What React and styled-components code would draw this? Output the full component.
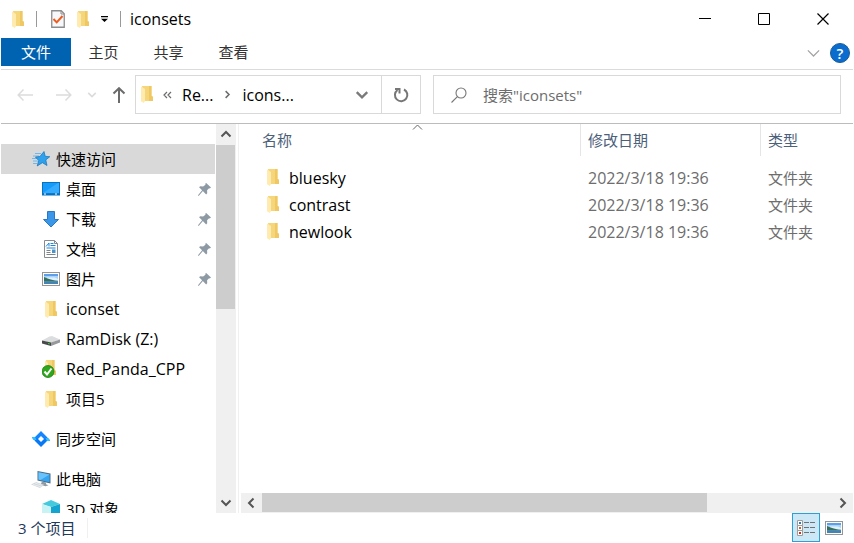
import React from 'react'
import styled, { createGlobalStyle } from 'styled-components'

const GlobalStyle = createGlobalStyle`
  * {
    box-sizing: border-box;
  }

  body {
    margin: 0;
    background: #fff;
    color: #000;
    font: 15px/20px "Open Sans", "Noto Sans CJK SC", sans-serif;
  }

  button, input {
    font: inherit;
    color: inherit;
    border: 0;
    padding: 0;
    background: none;
  }

  svg {
    display: block;
    flex: none;
  }
`

const Window = styled.div`
  display: flex;
  flex-direction: column;
  height: 100vh;
  padding: 0 1px;
  overflow: hidden;
`

const TitleBar = styled.header`
  display: flex;
  align-items: center;
  height: 38px;
  padding-left: 11px;
`

const QuickTools = styled.div`
  display: flex;
  align-items: center;
  gap: 12px;
`

const ToolButton = styled.button`
  display: flex;
  align-items: center;
  justify-content: center;
`

const Divider = styled.span`
  width: 1px;
  height: 16px;
  background: #999;
  margin-right: ${props => props.$space || 0}px;
`

const Title = styled.h1`
  margin: 0 0 0 9px;
  font-size: 16px;
  line-height: 20px;
  font-weight: 400;
`

const WindowButtons = styled.div`
  display: flex;
  margin-left: auto;
  padding-right: 1px;
`

const WindowButton = styled.button`
  display: flex;
  align-items: center;
  justify-content: center;
  width: 59px;
  height: 38px;
`

const Ribbon = styled.nav`
  display: flex;
  align-items: flex-start;
  height: 32px;
  border-bottom: 1px solid #dadbdc;
`

const Tab = styled.button`
  width: ${props => (props.$primary ? 70 : 65)}px;
  height: 28px;
  color: ${props => (props.$primary ? '#fff' : '#333')};
  background: ${props => (props.$primary ? '#0063b1' : 'transparent')};
`

const RibbonEnd = styled.div`
  display: flex;
  align-items: center;
  gap: 9px;
  height: 30px;
  margin-left: auto;
  padding-right: 3px;
`

const HelpButton = styled.button`
  width: 20px;
  height: 20px;
  border: 1px solid #1b5c96;
  border-radius: 50%;
  background: #0a6cce;
  color: #fff;
  font-size: 15px;
  line-height: 18px;
  font-weight: 600;
`

const NavBar = styled.div`
  display: flex;
  align-items: center;
  height: 54px;
  padding: 5px 12px 9px 0;
  border-bottom: 1px solid #bcbcbc;
`

const NavButtons = styled.div`
  display: flex;
  align-items: center;
  justify-content: space-between;
  width: 126px;
  margin-right: 8px;
  padding-left: 16px;
`

const HistoryButtons = styled.div`
  display: flex;
  gap: 23px;
`

const AddressBar = styled.div`
  display: flex;
  align-items: center;
  width: 286px;
  height: 39px;
  border: 1px solid #d9d9d9;
`

const Crumbs = styled.div`
  display: flex;
  align-items: center;
  flex: 1;
  gap: 10px;
  padding-left: 5px;
  font-size: 16px;
`

const AddressButton = styled.button`
  display: flex;
  align-items: center;
  justify-content: center;
  width: 39px;
  height: 37px;
  border-left: ${props => (props.$divided ? '1px solid #d9d9d9' : '0')};
`

const SearchBox = styled.label`
  display: flex;
  align-items: center;
  flex: 1;
  gap: 16px;
  height: 39px;
  margin-left: 12px;
  padding-left: 17px;
  border: 1px solid #d9d9d9;
`

const SearchInput = styled.input`
  flex: 1;
  min-width: 0;
  outline: none;

  &::placeholder {
    color: #6d6d6d;
    opacity: 1;
  }
`

const Body = styled.div`
  display: flex;
  flex: 1;
  min-height: 0;
`

const Sidebar = styled.aside`
  display: flex;
  width: 238px;
  padding-right: 2px;
  border-right: 1px solid #f0f0f0;
`

const Tree = styled.nav`
  flex: 1;
  margin-right: 1px;
  padding-top: 20px;
  overflow: hidden;
`

const TreeGroup = styled.div`
  margin-bottom: 10px;
`

const TreeItem = styled.a`
  display: flex;
  align-items: center;
  gap: 6px;
  height: 30px;
  padding: 0 4px 0 ${props => (props.$nested ? 41 : 31)}px;
  color: #000;
  text-decoration: none;
  white-space: nowrap;
  background: ${props => (props.$selected ? '#d9d9d9' : 'transparent')};
`

const IconSlot = styled.span`
  display: flex;
  justify-content: center;
  width: 18px;
`

const ItemLabel = styled.span`
  flex: 1;
  font-size: ${props => (props.$latin ? 16 : 15)}px;
`

const ScrollBar = styled.div`
  display: flex;
  flex-direction: ${props => (props.$horizontal ? 'row' : 'column')};
  width: ${props => (props.$horizontal ? 'auto' : '20px')};
  height: ${props => (props.$horizontal ? '20px' : 'auto')};
  background: #f0f0f0;
`

const ScrollButton = styled.button`
  display: flex;
  align-items: center;
  justify-content: center;
  width: 20px;
  height: 20px;
`

const ScrollTrack = styled.div`
  flex: 1;
  padding: ${props => (props.$horizontal ? '0 0 1px 1px' : '1px 1px 0 0')};
`

const ScrollThumb = styled.div`
  width: ${props => (props.$horizontal ? '78%' : '100%')};
  height: ${props => (props.$horizontal ? '100%' : '47%')};
  background: #cdcdcd;
`

const Content = styled.main`
  display: flex;
  flex-direction: column;
  flex: 1;
  min-width: 0;
  padding-left: 2px;
`

const ListArea = styled.div`
  flex: 1;
  overflow: hidden;
`

const FileTable = styled.table`
  width: 100%;
  table-layout: fixed;
  border-collapse: separate;
  border-spacing: 0;
`

const HeadCell = styled.th`
  position: relative;
  width: ${props => (props.$width ? props.$width + 'px' : 'auto')};
  height: 32px;
  padding: 0 0 0 ${props => (props.$first ? 21 : 7)}px;
  border-right: ${props => (props.$width ? '1px solid #e5e5e5' : '0')};
  color: #4c607a;
  font-weight: 400;
  text-align: left;
`

const SortMark = styled.span`
  position: absolute;
  top: 0;
  left: 50%;
`

const Spacer = styled.tr`
  height: 8px;
`

const Cell = styled.td`
  height: 27px;
  padding: 0 0 0 7px;
  color: #6d6d6d;
  font-size: ${props => (props.$latin ? 16 : 15)}px;
`

const NameCell = styled(Cell)`
  padding-left: 26px;
  color: #000;
`

const FileName = styled.span`
  display: flex;
  align-items: center;
  gap: 10px;
`

const StatusBar = styled.footer`
  display: flex;
  align-items: center;
  height: 30px;
  padding: 0 5px 1px 17px;
  color: #1e395b;
`

const StatusText = styled.span`
  padding-right: 12px;
  border-right: 1px solid #f0f0f0;
`

const ViewButtons = styled.div`
  display: flex;
  margin-left: auto;
`

const ViewButton = styled.button`
  display: flex;
  align-items: center;
  justify-content: center;
  width: 28px;
  height: 29px;
  border: 1px solid ${props => (props.$active ? '#2a9fd8' : 'transparent')};
  background: ${props => (props.$active ? '#cce8f6' : 'transparent')};
`

const Chevron = ({ dir = 'down', size = 12, color = '#555', width = 2 }) => {
  const turns = { down: 0, left: 90, up: 180, right: 270 }
  return (
    <svg width={size} height={size} viewBox="0 0 12 12" fill="none" stroke={color} strokeWidth={width}>
      <path d="M1.5 3.5 6 8l4.5-4.5" transform={`rotate(${turns[dir]} 6 6)`} />
    </svg>
  )
}

const Arrow = ({ dir, color }) => {
  const turns = { left: 0, up: 90, right: 180 }
  return (
    <svg width="16" height="16" viewBox="0 0 16 16" fill="none" stroke={color} strokeWidth={dir === 'up' ? 2 : 1.5}>
      <path d="M6.5 2.5 1.2 8l5.3 5.5M1.2 8H16" transform={`rotate(${turns[dir]} 8 8)`} />
    </svg>
  )
}

const FolderIcon = () => (
  <svg width="12" height="17" viewBox="0 0 12 17">
    <path d="M1 0h9.5v10l1.5.8V15H3z" fill="#f6d67b" />
    <path d="M8 0h2.5v10l1.5.8V15H8z" fill="#efc863" />
    <path d="M0 .6 4 3v12l-1.2 2L0 15.3z" fill="#ffebb0" />
  </svg>
)

const CheckedPageIcon = () => (
  <svg width="14" height="18" viewBox="0 0 14 18" fill="none">
    <path d="M.75.75h9.5l3 3v13.5H.75z" fill="#f7f8fa" stroke="#8c8c8c" strokeWidth="1.3" />
    <path d="M10 1v3h3" stroke="#8c8c8c" />
    <path d="m2.5 9 3.2 3.4L11.5 6" stroke="#f05a1c" strokeWidth="2" />
  </svg>
)

const MenuIcon = () => (
  <svg width="7" height="6" viewBox="0 0 7 6">
    <path d="M0 0h7v1.2H0zM0 2.8h7L3.5 6z" fill="#000" />
  </svg>
)

const StarIcon = () => (
  <svg width="18" height="18" viewBox="0 0 18 18">
    <path d="M3 3.5h6M1 6h6M0 8.5h5M1 11h5M1 13.5h4" stroke="#70b8ea" strokeWidth="1" />
    <path d="m12 1.5 1.2 4.8 4.6.4-4 3.2 1.2 5.6-4.6-2.8L5.2 16l1.5-5.5L3.4 7l4.5-.5z" fill="#2fa0ec" stroke="#1272ba" strokeWidth=".7" />
  </svg>
)

const DesktopIcon = () => (
  <svg width="18" height="14" viewBox="0 0 18 14">
    <rect x=".5" y=".5" width="17" height="12.5" fill="#149bfb" stroke="#0872bd" />
    <path d="M1 11 16 1h1v10z" fill="#35acff" />
    <path d="M1 12h16" stroke="#075b9c" />
    <path d="M2 12h2m9 0h2" stroke="#fff" />
  </svg>
)

const DownloadIcon = () => (
  <svg width="18" height="17" viewBox="0 0 18 17">
    <path d="M5.5.5h7v8h4L9 16 1.5 8.5h4z" fill="#3a96e6" stroke="#2a78c3" />
  </svg>
)

const DocumentIcon = () => (
  <svg width="14" height="18" viewBox="0 0 14 18" fill="none">
    <path d="M.5.5h10l3 3v14H.5z" fill="#fff" stroke="#858b90" />
    <path d="M10.5.5v3h3" stroke="#858b90" />
    <path d="M2 6.5 5 3v3.5M6.5 3.5h3M6.5 5.5h5M2.5 8h9" stroke="#1f87d6" strokeWidth="1" />
    <path d="M2.5 10.5h4M2.5 12.5h4M2.5 14.5h9" stroke="#7d8388" />
    <path d="M8 9.5h3.5V13H8z" fill="#4c92c8" />
  </svg>
)

const PictureIcon = () => (
  <svg width="18" height="14" viewBox="0 0 18 14">
    <rect x=".5" y=".5" width="17" height="13" fill="#fff" stroke="#959595" />
    <path d="M2 2h14v10H2z" fill="#a9d4f8" />
    <path d="M2 2h14v2H2z" fill="#5f9fe9" />
    <path d="M5 5.5h8L16 7v2H5z" fill="#dff0fa" />
    <path d="M2 5c3 1 6 3 14 3.8v.7H2z" fill="#36705a" />
    <path d="M2 9.2h14V12H2z" fill="#4583b2" />
  </svg>
)

const DriveIcon = () => (
  <svg width="18" height="14" viewBox="0 0 18 14">
    <path d="m0 8.500 7.500-4L10 4l8 3.500-9 3.500z" fill="#dcdddf" />
    <path d="m0 8.500 9 2V14l-9-2.500z" fill="#47494b" />
    <path d="m9 10.500 9-3v3L9 14z" fill="#96989b" />
    <path d="M6 11h1.600v1.400L6 12z" fill="#36c832" />
  </svg>
)

const SyncedFolderIcon = () => (
  <svg width="18" height="18" viewBox="0 0 18 18">
    <path d="M4 0h8.500v10l1.500 1v4H5z" fill="#f6d67b" />
    <path d="M10 0h2.500v10l1.500 1v4h-4z" fill="#efc863" />
    <path d="M3 .5 6 3v12l-3-1z" fill="#ffebb0" />
    <circle cx="6" cy="11.500" r="6" fill="#2fa61e" stroke="#1b7f10" strokeWidth=".8" />
    <path d="m2.500 11.500 2.500 3 4.500-6" fill="none" stroke="#fff" strokeWidth="2" />
  </svg>
)

const SyncSpaceIcon = () => (
  <svg width="18" height="16" viewBox="0 0 18 16">
    <path d="M0 6h3l6-6 6.500 6.500-2.500 2.500-4-4-4 4-1 .5Q1 9.500 0 6z" fill="#1485ff" />
    <path d="M18 10h-3l-6 6-6.500-6.500L5 7l4 4 4-4 1-.5q3 0 4 3.500z" fill="#0878f5" />
    <path d="M0 6h3l1.500 3Q1 9.500 0 6zM18 10h-3l-1.500-3q3.500-.5 4.500 3z" fill="#29c4ff" />
  </svg>
)

const ComputerIcon = () => (
  <svg width="20" height="17" viewBox="0 0 20 17">
    <path d="m6.500 0 13 2.500v10l-13-3z" fill="#536b7e" />
    <path d="m7.500 1.200 11 2.200v7.800l-11-2.500z" fill="#35a5f2" />
    <path d="m7.500 1.200 11 2.200-9 5.500-2-.4z" fill="#69c2fb" />
    <path d="m11 10.500 4 1v1.800l2.500 1-3 1-5-1.500z" fill="#8e9aa4" />
    <path d="m0 13.500 5-2.500 8 2.800L9 17z" fill="#d2d8dd" />
    <path d="m2 13.500 8 2.300M4 12l7 2.300" stroke="#fff" strokeWidth=".5" />
  </svg>
)

const CubeIcon = () => (
  <svg width="18" height="18" viewBox="0 0 18 18">
    <path d="m0 4 9-4 9 4-9 3z" fill="#45c9dc" />
    <path d="m0 4 9 3v11l-9-4z" fill="#c9f2f4" />
    <path d="m9 7 9-3v10l-9 4z" fill="#14a4cf" />
  </svg>
)

const PinIcon = () => (
  <svg width="13" height="13" viewBox="0 0 12 12" fill="#8d99a3">
    <path d="m7.5 0 4.500 4.200-1.200.8-.6-.2-1.800 2 .1 2.700-1 1-3-3.200L.6 12 0 11.300l3.800-4.600L1 4l1-.9 2.700.1L6.900 1.600 6.700.7z" />
  </svg>
)

const DetailsIcon = () => (
  <svg width="18" height="17" viewBox="0 0 18 17" fill="none">
    <path d="M.5 1.500h5v5h-5zM.5 6.500h5v5h-5zM.5 11.500h5v5h-5z" fill="#fff" stroke="#a09c9a" />
    <path d="M2 3h2v2H2z" fill="#3178a8" />
    <path d="M2 8h2v2H2z" fill="#c56731" />
    <path d="M2 13h2v2H2z" fill="#d32c1d" />
    <path d="M7 3.500h5m1 0h5M7 8.500h5m1 0h5M7 13.500h5m1 0h5" stroke="#727272" />
  </svg>
)

const treeGroups = [
  [
    { name: '快速访问', icon: StarIcon, selected: true },
    { name: '桌面', icon: DesktopIcon, nested: true, pinned: true },
    { name: '下载', icon: DownloadIcon, nested: true, pinned: true },
    { name: '文档', icon: DocumentIcon, nested: true, pinned: true },
    { name: '图片', icon: PictureIcon, nested: true, pinned: true },
    { name: 'iconset', icon: FolderIcon, nested: true, latin: true },
    { name: 'RamDisk (Z:)', icon: DriveIcon, nested: true, latin: true },
    { name: 'Red_Panda_CPP', icon: SyncedFolderIcon, nested: true, latin: true },
    { name: '项目5', icon: FolderIcon, nested: true }
  ],
  [{ name: '同步空间', icon: SyncSpaceIcon }],
  [
    { name: '此电脑', icon: ComputerIcon },
    { name: '3D 对象', icon: CubeIcon, nested: true }
  ]
]

const files = ['bluesky', 'contrast', 'newlook']

function App() {
  return (
    <Window>
      <GlobalStyle />
      <TitleBar>
        <QuickTools>
          <FolderIcon />
          <Divider $space={2} />
          <ToolButton aria-label="属性"><CheckedPageIcon /></ToolButton>
          <ToolButton aria-label="新建文件夹"><FolderIcon /></ToolButton>
          <ToolButton aria-label="自定义快速访问工具栏"><MenuIcon /></ToolButton>
          <Divider />
        </QuickTools>
        <Title>iconsets</Title>
        <WindowButtons>
          <WindowButton aria-label="最小化">
            <svg width="12" height="12"><path d="M0 5.5h12" stroke="#000" /></svg>
          </WindowButton>
          <WindowButton aria-label="最大化">
            <svg width="12" height="12"><path d="M.5.5h11v11H.5z" fill="none" stroke="#000" /></svg>
          </WindowButton>
          <WindowButton aria-label="关闭">
            <svg width="12" height="12"><path d="m.5.5 11 11m0-11-11 11" stroke="#000" strokeWidth="1.2" /></svg>
          </WindowButton>
        </WindowButtons>
      </TitleBar>

      <Ribbon>
        <Tab $primary>文件</Tab>
        <Tab>主页</Tab>
        <Tab>共享</Tab>
        <Tab>查看</Tab>
        <RibbonEnd>
          <ToolButton aria-label="展开功能区"><Chevron size={15} color="#a3a3a3" width={1} /></ToolButton>
          <HelpButton aria-label="帮助">?</HelpButton>
        </RibbonEnd>
      </Ribbon>

      <NavBar>
        <NavButtons>
          <HistoryButtons>
            <ToolButton aria-label="后退"><Arrow dir="left" color="#dcdcdc" /></ToolButton>
            <ToolButton aria-label="前进"><Arrow dir="right" color="#dcdcdc" /></ToolButton>
          </HistoryButtons>
          <ToolButton aria-label="最近浏览的位置"><Chevron size={10} color="#dcdcdc" /></ToolButton>
          <ToolButton aria-label="向上"><Arrow dir="up" color="#6b6b6b" /></ToolButton>
        </NavButtons>
        <AddressBar>
          <Crumbs>
            <FolderIcon />
            <ToolButton aria-label="更多">
              <svg width="9" height="8" fill="none" stroke="#6b6b6b" strokeWidth="1.2"><path d="M4 1 1 4l3 3M8 1 5 4l3 3" /></svg>
            </ToolButton>
            <ToolButton>Re...</ToolButton>
            <Chevron dir="right" size={9} color="#6b6b6b" />
            <ToolButton>icons...</ToolButton>
          </Crumbs>
          <AddressButton aria-label="上一个位置"><Chevron size={14} color="#7a7a7a" /></AddressButton>
          <AddressButton $divided aria-label="刷新">
            <svg width="16" height="16" viewBox="0 0 16 16" fill="none" stroke="#767676" strokeWidth="2">
              <path d="M11 2.500A6.200 6.200 0 1 1 4.500 3" />
              <path d="M2 2h4.500v4.500" />
            </svg>
          </AddressButton>
        </AddressBar>
        <SearchBox>
          <svg width="16" height="16" viewBox="0 0 16 16" fill="none" stroke="#777" strokeWidth="1.1">
            <circle cx="10" cy="6" r="5" />
            <path d="M6.400 9.600.5 15.500" />
          </svg>
          <SearchInput aria-label="搜索" placeholder={'搜索"iconsets"'} />
        </SearchBox>
      </NavBar>

      <Body>
        <Sidebar>
          <Tree>
            {treeGroups.map((group, index) => (
              <TreeGroup key={index}>
                {group.map(({ name, icon: Icon, nested, selected, pinned, latin }) => (
                  <TreeItem key={name} href="#" $nested={nested} $selected={selected}>
                    <IconSlot><Icon /></IconSlot>
                    <ItemLabel $latin={latin}>{name}</ItemLabel>
                    {pinned && <PinIcon />}
                  </TreeItem>
                ))}
              </TreeGroup>
            ))}
          </Tree>
          <ScrollBar>
            <ScrollButton aria-label="向上滚动"><Chevron dir="up" /></ScrollButton>
            <ScrollTrack><ScrollThumb /></ScrollTrack>
            <ScrollButton aria-label="向下滚动"><Chevron /></ScrollButton>
          </ScrollBar>
        </Sidebar>

        <Content>
          <ListArea>
            <FileTable>
              <thead>
                <tr>
                  <HeadCell $first $width={340}>
                    名称
                    <SortMark>
                      <svg width="12" height="6" fill="none" stroke="#666"><path d="M2 5.500 6.500 1 11 5.500" /></svg>
                    </SortMark>
                  </HeadCell>
                  <HeadCell $width={180}>修改日期</HeadCell>
                  <HeadCell>类型</HeadCell>
                </tr>
              </thead>
              <tbody>
                <Spacer />
                {files.map(name => (
                  <tr key={name}>
                    <NameCell $latin>
                      <FileName><FolderIcon />{name}</FileName>
                    </NameCell>
                    <Cell $latin>2022/3/18 19:36</Cell>
                    <Cell>文件夹</Cell>
                  </tr>
                ))}
              </tbody>
            </FileTable>
          </ListArea>
          <ScrollBar $horizontal>
            <ScrollButton aria-label="向左滚动"><Chevron dir="left" /></ScrollButton>
            <ScrollTrack $horizontal><ScrollThumb $horizontal /></ScrollTrack>
            <ScrollButton aria-label="向右滚动"><Chevron dir="right" /></ScrollButton>
          </ScrollBar>
        </Content>
      </Body>

      <StatusBar>
        <StatusText>3 个项目</StatusText>
        <ViewButtons>
          <ViewButton $active aria-label="详细信息"><DetailsIcon /></ViewButton>
          <ViewButton aria-label="大图标"><PictureIcon /></ViewButton>
        </ViewButtons>
      </StatusBar>
    </Window>
  )
}

export default App
